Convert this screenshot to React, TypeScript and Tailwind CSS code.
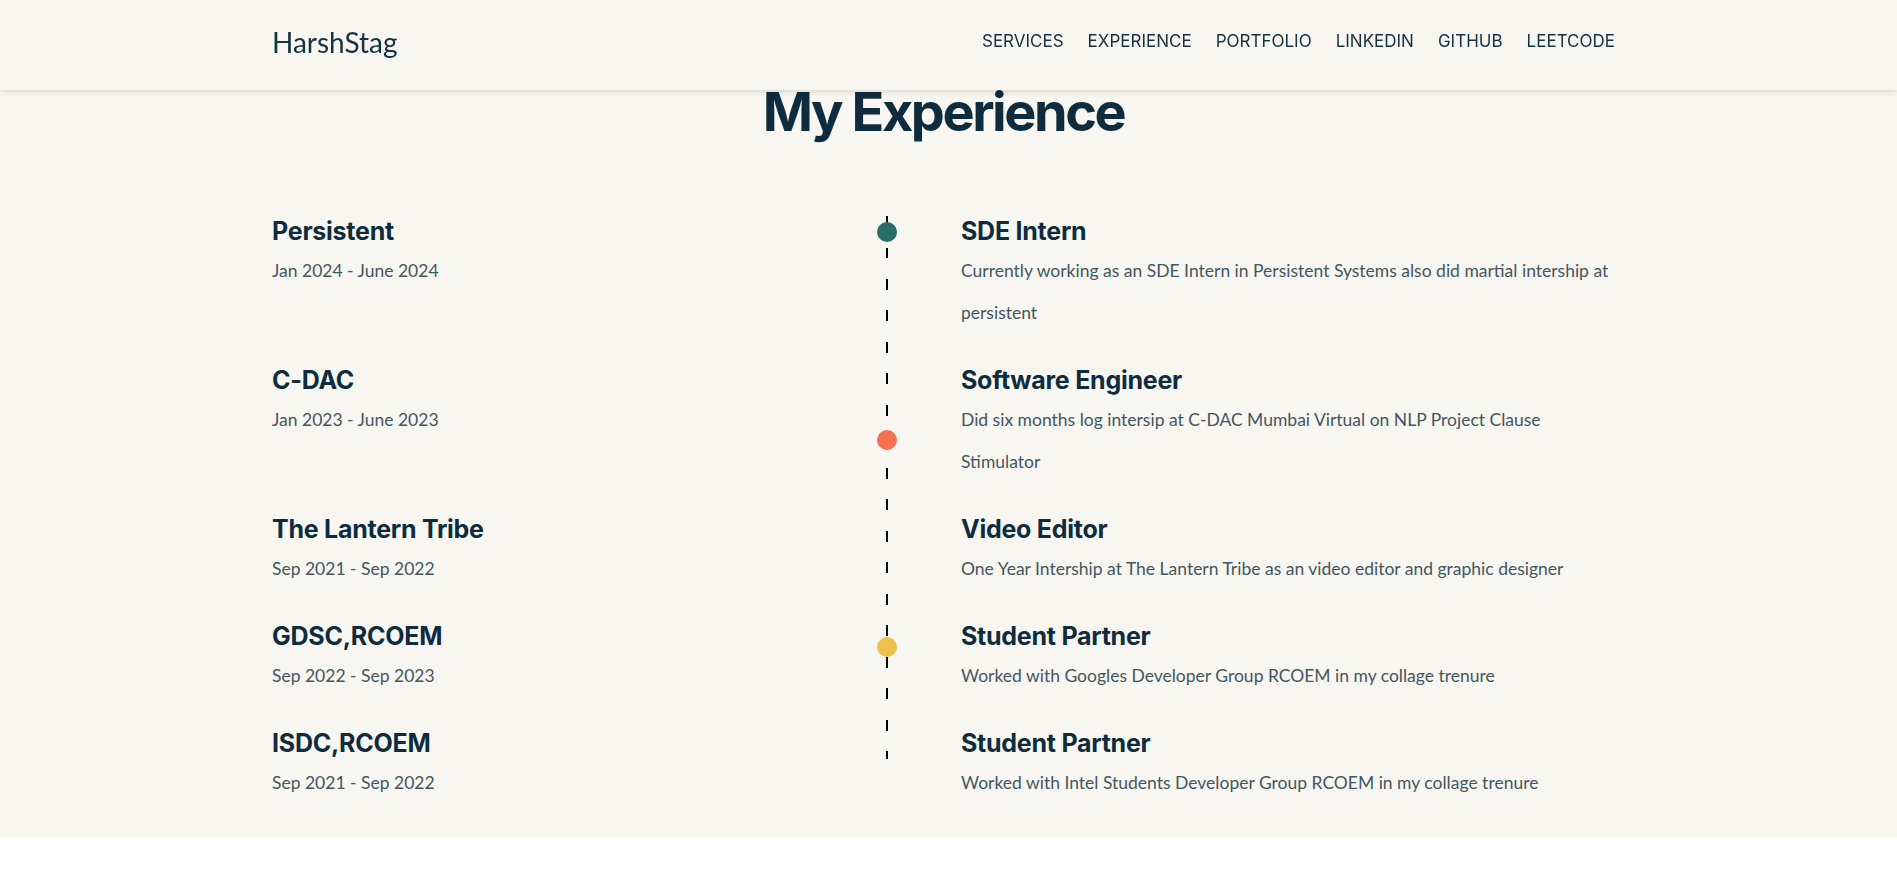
import React from 'react';

const navItems = ['SERVICES', 'EXPERIENCE', 'PORTFOLIO', 'LINKEDIN', 'GITHUB', 'LEETCODE'];

const jobs = [
    { company: 'Persistent', dates: 'Jan 2024 - June 2024', role: 'SDE Intern', text: 'Currently working as an SDE Intern in Persistent Systems also did martial intership at persistent' },
    { company: 'C-DAC', dates: 'Jan 2023 - June 2023', role: 'Software Engineer', text: 'Did six months log intersip at C-DAC Mumbai Virtual on NLP Project Clause Stimulator' },
    { company: 'The Lantern Tribe', dates: 'Sep 2021 - Sep 2022', role: 'Video Editor', text: 'One Year Intership at The Lantern Tribe as an video editor and graphic designer' },
    { company: 'GDSC,RCOEM', dates: 'Sep 2022 - Sep 2023', role: 'Student Partner', text: 'Worked with Googles Developer Group RCOEM in my collage trenure' },
    { company: 'ISDC,RCOEM', dates: 'Sep 2021 - Sep 2022', role: 'Student Partner', text: 'Worked with Intel Students Developer Group RCOEM in my collage trenure' },
];

const Header: React.FC = () => (
    <header className="fixed top-0 left-0 right-0 z-10 h-[90px] bg-[#f7f6f1] shadow-[0_2px_6px_rgba(0,0,0,0.13)]">
        <div className="ml-[272px] w-[1343px] h-full flex items-center justify-between pb-[7px]">
            <div className="font-['Lato',sans-serif] text-[28px] text-[#15333f]">HarshStag</div>
            <nav className="flex items-center gap-[24px] font-['Inter',sans-serif] text-[17px] text-[#15333f]">
                {navItems.map((item) => (
                    <a key={item} className="cursor-pointer">{item}</a>
                ))}
            </nav>
        </div>
    </header>
);

const Timeline: React.FC = () => (
    <div className="relative mt-[77px] flex flex-col gap-[31px]">
        {/* dashed spine + coloured markers */}
        <div className="absolute top-0 left-[614px] w-[2px] h-[543px] bg-[repeating-linear-gradient(to_bottom,#000_0px,#000_11px,transparent_11px,transparent_31.5px)]" />
        <div className="absolute top-[6px] left-[605px] w-5 h-5 rounded-full bg-[#276e69]" />
        <div className="absolute top-[214px] left-[605px] w-5 h-5 rounded-full bg-[#f37050]" />
        <div className="absolute top-[421px] left-[605px] w-5 h-5 rounded-full bg-[#eec14c]" />
        {jobs.map((job, i) => (
            <div key={i} className="grid grid-cols-[689px_1fr]">
                <div>
                    <h3 className="font-['Inter',sans-serif] font-bold text-[25px] leading-[30px] tracking-[-0.01em] text-[#0e2c3e] mb-1">{job.company}</h3>
                    <p className="font-['Lato',sans-serif] text-[17.5px] leading-[42px] text-[#44565f]">{job.dates}</p>
                </div>
                <div>
                    <h3 className="font-['Inter',sans-serif] font-bold text-[25px] leading-[30px] tracking-[-0.01em] text-[#0e2c3e] mb-1">{job.role}</h3>
                    <p className="font-['Lato',sans-serif] text-[17.5px] leading-[42px] text-[#44565f]">{job.text}</p>
                </div>
            </div>
        ))}
    </div>
);

export default function App() {
    return (
        <div className="min-h-screen bg-white">
            <Header />
            <main className="bg-[#f7f6f1] pt-[85px] pb-[34px]">
                <div className="ml-[272px] w-[1343px]">
                    <h2 className="text-center font-['Inter',sans-serif] font-bold text-[54px] leading-none tracking-[-0.045em] text-[#0e2c3e]">My Experience</h2>
                    <Timeline />
                </div>
            </main>
        </div>
    );
}
